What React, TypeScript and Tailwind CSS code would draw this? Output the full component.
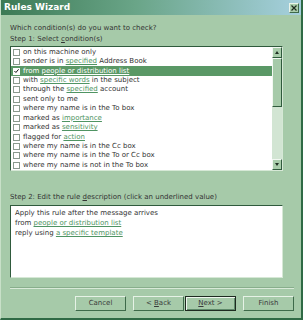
import React from "react";

const font = "font-['Tahoma','DejaVu_Sans','Liberation_Sans',sans-serif]";

type Part = { text: string; link?: boolean };

const conditions: { parts: Part[]; checked?: boolean }[] = [
  { parts: [{ text: "on this machine only" }] },
  { parts: [{ text: "sender is in " }, { text: "specified", link: true }, { text: " Address Book" }] },
  { parts: [{ text: "from " }, { text: "people or distribution list", link: true }], checked: true },
  { parts: [{ text: "with " }, { text: "specific words", link: true }, { text: " in the subject" }] },
  { parts: [{ text: "through the " }, { text: "specified", link: true }, { text: " account" }] },
  { parts: [{ text: "sent only to me" }] },
  { parts: [{ text: "where my name is in the To box" }] },
  { parts: [{ text: "marked as " }, { text: "importance", link: true }] },
  { parts: [{ text: "marked as " }, { text: "sensitivity", link: true }] },
  { parts: [{ text: "flagged for " }, { text: "action", link: true }] },
  { parts: [{ text: "where my name is in the Cc box" }] },
  { parts: [{ text: "where my name is in the To or Cc box" }] },
  { parts: [{ text: "where my name is not in the To box" }] },
];

function Checkbox({ checked, selected }: { checked?: boolean; selected?: boolean }) {
  return (
    <span
      className={`flex h-[7px] w-[7px] shrink-0 items-center justify-center border ${
        selected ? "border-white bg-white" : "border-[#8a9a8e] bg-white"
      }`}
    >
      {checked && (
        <svg width="6" height="6" viewBox="0 0 6 6">
          <path d="M0.5 3 L2.3 4.8 L5.5 1" fill="none" stroke="#111" strokeWidth="1.2" />
        </svg>
      )}
    </span>
  );
}

function Row({ parts, checked }: { parts: Part[]; checked?: boolean }) {
  const sel = !!checked;
  return (
    <div
      className={`flex h-[9.5px] items-center gap-[3px] pl-[2px] text-[7px] leading-none ${
        sel ? "bg-[#5a9866] text-white" : "text-[#333]"
      }`}
    >
      <Checkbox checked={checked} selected={sel} />
      <span className="whitespace-nowrap">
        {parts.map((p, i) =>
          p.link ? (
            <span key={i} className={`underline ${sel ? "text-white" : "text-[#4f9463]"}`}>
              {p.text}
            </span>
          ) : (
            <span key={i}>{p.text}</span>
          )
        )}
      </span>
    </div>
  );
}

function ScrollBtn({ down }: { down?: boolean }) {
  return (
    <div className="flex h-[11px] w-[10px] items-center justify-center border border-[#f2f8f2] border-r-[#2f5a3c] border-b-[#2f5a3c] bg-[#a9cdab]">
      <svg width="4" height="3" viewBox="0 0 4 3">
        <path d={down ? "M0 0 H4 L2 3 Z" : "M0 3 H4 L2 0 Z"} fill="#1f2f22" />
      </svg>
    </div>
  );
}

function Button({ label, def }: { label: React.ReactNode; def?: boolean }) {
  return (
    <div
      className={`flex h-[15px] w-[51px] items-center justify-center text-[7px] text-[#3a3a3a] ${
        def
          ? "border border-[#1e2a20] bg-[#a6caa9] shadow-[inset_1px_1px_0_#eef6ee,inset_-1px_-1px_0_#5f8a6a]"
          : "border border-[#e6f2e6] border-r-[#3e6a4a] border-b-[#3e6a4a] bg-[#a6caa9]"
      }`}
    >
      {label}
    </div>
  );
}

export default function App() {
  return (
    <div
      className={`${font} flex h-[320px] w-[303px] flex-col border-r-2 border-b-2 border-l border-[#2f6a45] border-l-[#c8e0c8] bg-[#a6caa9]`}
    >
      {/* Title bar */}
      <div className="flex h-[15px] items-center justify-between bg-[linear-gradient(to_right,#3c7a55,#6aa588_45%,#a6d0de)] pl-[3px] pr-[2px]">
        <span className="text-[9px] font-bold leading-none text-white">Rules Wizard</span>
        <div className="flex h-[10px] w-[10px] items-center justify-center border border-[#eaf4ea] border-r-[#3e6a4a] border-b-[#3e6a4a] bg-[#a9cdab]">
          <svg width="6" height="6" viewBox="0 0 6 6">
            <path d="M0.5 0.5 L5.5 5.5 M5.5 0.5 L0.5 5.5" stroke="#1e2a20" strokeWidth="1.2" />
          </svg>
        </div>
      </div>

      <div className="flex flex-1 flex-col pl-[9px] pr-[7px] text-[7px] text-[#333]">
        <div className="mt-[8px] leading-[10px]">Which condition(s) do you want to check?</div>
        <div className="mt-[1px] leading-[10px]">
          Step 1: Select <span className="underline">c</span>ondition(s)
        </div>

        {/* Conditions list */}
        <div className="mt-[2px] mr-[11px] flex h-[125px] border border-[#2f5a3c] border-r-[#d6e8d6] border-b-[#d6e8d6] bg-white">
          <div className="flex flex-1 flex-col pt-[0.5px]">
            {conditions.map((c, i) => (
              <Row key={i} parts={c.parts} checked={c.checked} />
            ))}
          </div>
          <div className="flex w-[10px] flex-col bg-[#d2e5d3]">
            <ScrollBtn />
            <div className="h-[49px] border border-[#f2f8f2] border-r-[#2f5a3c] border-b-[#2f5a3c] bg-[#a6caa9]" />
            <div className="flex-1" />
            <ScrollBtn down />
          </div>
        </div>

        <div className="mt-[21px] leading-[10px]">
          Step 2: Edit the rule <span className="underline">d</span>escription (click an underlined value)
        </div>

        {/* Description box */}
        <div className="mt-[3px] mr-[11px] h-[73px] border border-[#2f5a3c] border-r-[#d6e8d6] border-b-[#d6e8d6] bg-white pl-[4px] pt-[2px] leading-[10px]">
          <div>Apply this rule after the message arrives</div>
          <div>
            from <span className="text-[#4f9463] underline">people or distribution list</span>
          </div>
          <div>
            reply using <span className="text-[#4f9463] underline">a specific template</span>
          </div>
        </div>

        <div className="mt-[9px] h-[2px] border-t border-[#88ae8c] border-b border-b-[#d8ead8]" />

        <div className="mt-[7px] flex justify-end gap-[7px]">
          <Button label="Cancel" />
          <div className="flex gap-[1px]">
            <Button label={<span>&lt; <span className="underline">B</span>ack</span>} />
            <Button def label={<span><span className="underline">N</span>ext &gt;</span>} />
          </div>
          <Button label="Finish" />
        </div>
      </div>
    </div>
  );
}
